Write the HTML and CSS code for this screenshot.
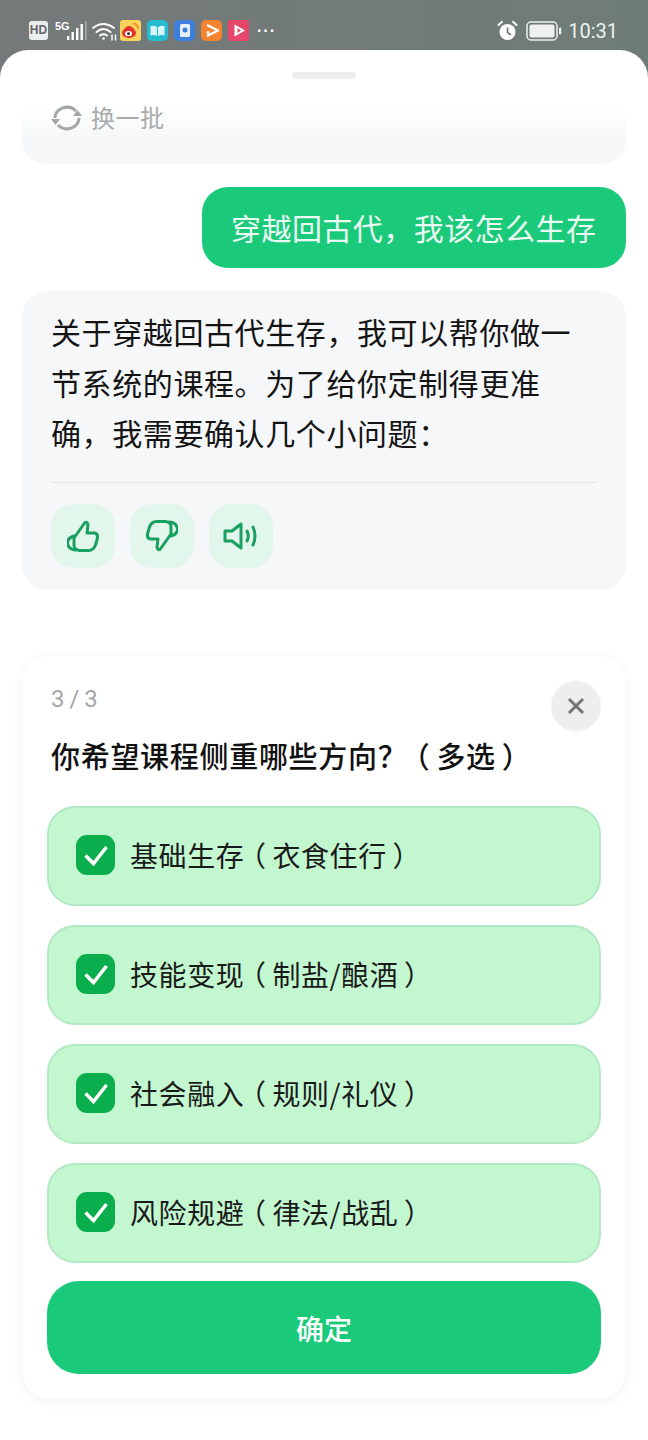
FILE: index.html
```html
<!DOCTYPE html>
<html lang="zh-CN">
<head>
  <meta charset="UTF-8"/>
  <meta name="viewport" content="width=device-width,initial-scale=1.0"/>
  <title>穿越回古代</title>
  <link rel="stylesheet" href="styles.css">
</head>
<body>
  <div class="statusbar">
    <div class="status-left">
      <span class="hd">HD</span>
      <span class="net">
        <span class="net-label">5G</span>
        <svg class="signal" width="20" height="20" viewBox="0 0 20 20">
          <rect x="0" y="15" width="2.400" height="4" fill="#fff"/>
          <rect x="4.500" y="11" width="2.400" height="8" fill="#fff"/>
          <rect x="9" y="7" width="2.400" height="12" fill="#fff"/>
          <rect x="13.500" y="3" width="2.400" height="16" fill="#fff"/>
          <rect x="18" y="0" width="1.600" height="19" fill="#a5abaa"/>
        </svg>
      </span>
      <svg class="wifi" width="25" height="20" viewBox="0 0 25 20" fill="none" stroke="#fff" stroke-width="2" stroke-linecap="round">
        <path d="M1 7Q11 -1 22 7"/>
        <path d="M4.500 11Q11.500 5 18.500 11"/>
        <path d="M8 14.500Q11.500 12 15 14.500"/>
        <circle cx="11.500" cy="17.500" r="1.300" fill="#fff" stroke="none"/>
        <path d="M20 14v5M23.500 14v5" stroke-width="1.500"/>
      </svg>
      <span class="apps">
        <svg class="app" viewBox="0 0 21 21">
          <rect width="21" height="21" rx="3" fill="#fbd35c"/>
          <ellipse cx="9" cy="13" rx="7" ry="5" fill="#e0362c"/>
          <path d="M3 11Q7 4 12 7Q14 8 14 10" fill="#e0362c"/>
          <ellipse cx="8.500" cy="13.500" rx="3.500" ry="2.600" fill="#fff"/>
          <circle cx="8.500" cy="13.700" r="1.400" fill="#222"/>
          <path d="M13 3.500Q18 4 18 9" stroke="#f08a24" stroke-width="1.500" fill="none"/>
        </svg>
        <svg class="app" viewBox="0 0 21 21">
          <rect width="21" height="21" rx="5" fill="#25bcd0"/>
          <path d="M3.500 6Q7 5 10 7V16Q7 14.500 3.500 15.500ZM17.500 6Q14 5 11 7V16Q14 14.500 17.500 15.500Z" fill="#d8f6fa"/>
        </svg>
        <svg class="app" viewBox="0 0 21 21">
          <rect width="21" height="21" rx="5" fill="#3f7fdc"/>
          <rect x="6" y="4" width="10" height="13" rx="1.500" fill="#e4f0fd"/>
          <circle cx="11" cy="10" r="2.500" fill="#3f7fdc"/>
        </svg>
        <svg class="app" viewBox="0 0 21 21">
          <rect width="21" height="21" rx="5" fill="#f5832f"/>
          <path d="M6 5L17 10.500L6 16" fill="none" stroke="#fff" stroke-width="2.400" stroke-linejoin="round"/>
          <circle cx="7" cy="12.500" r="1.500" fill="#fff"/>
        </svg>
        <svg class="app" viewBox="0 0 21 21">
          <rect width="21" height="21" rx="2" fill="#e5476a"/>
          <path d="M6.500 4.500L17 10.500L6.500 16.500Z" fill="#fff"/>
          <path d="M9.500 8L13 10.500L9.500 13Z" fill="#e5476a"/>
        </svg>
      </span>
      <span class="more">···</span>
    </div>
    <div class="status-right">
      <svg class="alarm" width="21" height="21" viewBox="0 0 21 21">
        <circle cx="10.500" cy="12" r="8" fill="#fff"/>
        <path d="M10.500 7.500V12.500L14 15" fill="none" stroke="#6f7a77" stroke-width="1.700"/>
        <path d="M1.500 5L5 1.800M19.500 5L16 1.800" stroke="#fff" stroke-width="2" stroke-linecap="round"/>
      </svg>
      <svg class="battery" width="36" height="20" viewBox="0 0 36 20">
        <rect x="1" y="1" width="30" height="18" rx="4" fill="none" stroke="#eef1f0" stroke-width="1.500"/>
        <rect x="3.500" y="3.500" width="25" height="13" rx="2" fill="#eef1f0"/>
        <rect x="33" y="6.500" width="2.200" height="7" rx="1" fill="#eef1f0"/>
      </svg>
      <span class="time">10:31</span>
    </div>
  </div>

  <div class="sheet">
    <div class="handle"></div>

    <div class="stub">
      <svg class="refresh" width="32" height="28" viewBox="0 0 32 28" fill="none" stroke="#a2a6a6" stroke-width="3">
        <path d="M4 14A12 11 0 0 1 25 7"/>
        <path d="M28 14A12 11 0 0 1 7 21"/>
        <path d="M22 12H31L26.500 6Z" fill="#a2a6a6" stroke="none"/>
        <path d="M0 15H9L4.500 21Z" fill="#a2a6a6" stroke="none"/>
      </svg>
      <span>换一批</span>
    </div>

    <div class="user-row">
      <div class="user-bubble">穿越回古代，我该怎么生存</div>
    </div>

    <div class="bot-card">
      <p class="bot-text">关于穿越回古代生存，我可以帮你做一节系统的课程。为了给你定制得更准确，我需要确认几个小问题：</p>
      <div class="actions">
        <button class="action">
          <svg width="32" height="32" viewBox="0 0 32 32" class="action-icon">
            <path d="M7 18L18 2.500Q20 1.500 21 4.500L20 13H27.500Q31 13.500 30.500 18L28.500 25Q26.500 30.500 21.500 30.500H12.500Q7 30 7 25Z"/>
            <path d="M7 16Q0.500 18 0.500 23Q1 29 8.500 30"/>
          </svg>
        </button>
        <button class="action">
          <svg width="32" height="32" viewBox="0 0 32 32" class="action-icon">
            <g transform="rotate(180 16 16)">
              <path d="M7 18L18 2.500Q20 1.500 21 4.500L20 13H27.500Q31 13.500 30.500 18L28.500 25Q26.500 30.500 21.500 30.500H12.500Q7 30 7 25Z"/>
              <path d="M7 16Q0.500 18 0.500 23Q1 29 8.500 30"/>
            </g>
          </svg>
        </button>
        <button class="action">
          <svg width="36" height="32" viewBox="0 0 36 32" class="action-icon">
            <path d="M2 11V21H9L18 28V4L9 11Z"/>
            <path d="M24 11Q26.500 16 24 21"/>
            <path d="M30 7Q34 16 30 25"/>
          </svg>
        </button>
      </div>
    </div>

    <div class="question-card">
      <div class="question-head">
        <div>
          <div class="step">3 / 3</div>
          <div class="question">你希望课程侧重哪些方向？<span class="paren">（</span>多选<span class="paren">）</span></div>
        </div>
        <button class="close">
          <svg width="18" height="18" viewBox="0 0 18 18" fill="none" stroke="#757575" stroke-width="3">
            <path d="M2 2L16 16M16 2L2 16"/>
          </svg>
        </button>
      </div>

      <div class="options">
        <div class="option">
          <span class="check"><svg width="26" height="26" viewBox="0 0 26 26" fill="none" stroke="#fff" stroke-width="3.500"><path d="M2.500 13.500L10.500 21.500L23.500 5"/></svg></span>
          <span>基础生存<span class="paren">（</span>衣食住行<span class="paren">）</span></span>
        </div>
        <div class="option">
          <span class="check"><svg width="26" height="26" viewBox="0 0 26 26" fill="none" stroke="#fff" stroke-width="3.500"><path d="M2.500 13.500L10.500 21.500L23.500 5"/></svg></span>
          <span>技能变现<span class="paren">（</span>制盐/酿酒<span class="paren">）</span></span>
        </div>
        <div class="option">
          <span class="check"><svg width="26" height="26" viewBox="0 0 26 26" fill="none" stroke="#fff" stroke-width="3.500"><path d="M2.500 13.500L10.500 21.500L23.500 5"/></svg></span>
          <span>社会融入<span class="paren">（</span>规则/礼仪<span class="paren">）</span></span>
        </div>
        <div class="option">
          <span class="check"><svg width="26" height="26" viewBox="0 0 26 26" fill="none" stroke="#fff" stroke-width="3.500"><path d="M2.500 13.500L10.500 21.500L23.500 5"/></svg></span>
          <span>风险规避<span class="paren">（</span>律法/战乱<span class="paren">）</span></span>
        </div>
      </div>

      <button class="confirm">确定</button>
    </div>
  </div>
</body>
</html>
```

FILE: styles.css
```css
* { box-sizing: border-box; }

html, body {
  margin: 0;
  height: 1440px;
  overflow: hidden;
}
body {
  font-family: "Noto Sans CJK SC", "Noto Sans", sans-serif;
  background: linear-gradient(90deg, #75797a, #6e7c77);
  color: #1a1a1a;
}
button {
  border: none;
  padding: 0;
  font-family: inherit;
}
/* brackets sit in the middle of the em box in the reference */
.paren {
  display: inline-block;
  width: 1em;
  text-align: center;
  font-feature-settings: "palt";
}

/* status bar */
.statusbar {
  height: 50px;
  padding: 20px 30px 0 29px;
  display: flex;
  justify-content: space-between;
  align-items: flex-start;
}
.status-left, .status-right {
  display: flex;
  align-items: center;
}
.hd {
  width: 19px;
  height: 19px;
  border-radius: 3px;
  background: #eceeee;
  color: #62676a;
  font: bold 12px/19px "Liberation Sans", sans-serif;
  text-align: center;
}
.net {
  width: 33px;
  height: 20px;
  margin-left: 7px;
  display: flex;
  align-items: flex-end;
  position: relative;
}
.net-label {
  position: absolute;
  left: 0;
  top: -1px;
  color: #fff;
  font: bold 11px/12px "Liberation Sans Narrow", "Liberation Sans", sans-serif;
}
.signal { margin-left: 12px; }
.wifi { margin-left: 4px; }
.apps {
  display: flex;
  gap: 6px;
  margin-left: 3px;
}
.app {
  width: 21px;
  height: 21px;
  display: block;
}
.more {
  margin-left: 8px;
  color: #fff;
  font: bold 16px/20px "Liberation Sans", sans-serif;
  letter-spacing: 1px;
}
.status-right { gap: 8px; }
.battery { margin-right: -2px; }
.time {
  color: #eef1f0;
  font: 20px/20px Roboto, sans-serif;
}

/* sheet */
.sheet {
  height: 1390px;
  padding: 22px 22px 0;
  background: #fff;
  border-radius: 28px 28px 0 0;
}
.handle {
  width: 64px;
  height: 7px;
  margin: 0 auto;
  border-radius: 4px;
  background: #eeeeee;
}

.stub {
  height: 64px;
  margin-top: 21px;
  padding: 0 0 0 29px;
  display: flex;
  align-items: flex-start;
  gap: 8px;
  border-radius: 0 0 24px 24px;
  background: linear-gradient(180deg, #fff 10%, #f5f7f8 60%);
  color: #a8acac;
  font-size: 24px;
  line-height: 34px;
  letter-spacing: 0.500px;
}
.refresh { margin-top: 4px; }

.user-row {
  display: flex;
  justify-content: flex-end;
  margin-top: 23px;
}
.user-bubble {
  width: 424px;
  height: 81px;
  padding: 0 0 2px 29px;
  display: flex;
  align-items: center;
  border-radius: 26px;
  background: #1bc97a;
  color: #e9fbf2;
  font-size: 30px;
  letter-spacing: 0.450px;
}

.bot-card {
  height: 299px;
  margin-top: 23px;
  padding: 15px 29px 0;
  border-radius: 26px;
  background: #f6f7f9;
}
.bot-text {
  margin: 0;
  height: 177px;
  border-bottom: 1px solid #e4e6e8;
  color: #141414;
  font-size: 30px;
  line-height: 50.500px;
  letter-spacing: 0.600px;
}
.actions {
  display: flex;
  gap: 15px;
  margin-top: 21px;
}
.action {
  width: 64px;
  height: 64px;
  display: flex;
  align-items: center;
  justify-content: center;
  border-radius: 22px;
  background: #e3f6ec;
}
.action-icon {
  fill: none;
  stroke: #17a060;
  stroke-width: 3;
  stroke-linejoin: round;
  stroke-linecap: round;
}

/* question card */
.question-card {
  height: 743px;
  margin-top: 66px;
  padding: 25px 25px 0;
  border-radius: 28px;
  background: #fff;
  box-shadow: 0 2px 14px rgba(0,0,0,0.05);
}
.question-head {
  display: flex;
  justify-content: space-between;
  align-items: flex-start;
}
.question-head > div { padding-left: 4px; }
.step {
  color: #a6a6a6;
  font: 24px/36px Roboto, sans-serif;
  letter-spacing: -0.500px;
}
.question {
  margin-top: 16px;
  font-size: 29px;
  line-height: 44px;
  font-weight: 500;
  letter-spacing: 0.700px;
  color: #111;
  white-space: nowrap;
}
.close {
  width: 50px;
  height: 50px;
  display: flex;
  align-items: center;
  justify-content: center;
  border-radius: 50%;
  background: #eeeeee;
}

.options {
  display: flex;
  flex-direction: column;
  gap: 19px;
  margin-top: 29px;
}
.option {
  height: 100px;
  padding: 0 0 2px 27px;
  display: flex;
  align-items: center;
  gap: 15px;
  border: 2px solid #b2e9c4;
  border-radius: 28px;
  background: #c3f7d0;
  font-size: 28px;
  letter-spacing: 0.600px;
}
.check {
  width: 39px;
  height: 40px;
  display: flex;
  align-items: center;
  justify-content: center;
  border-radius: 11px;
  background: #0aae4c;
}

.confirm {
  display: block;
  width: 100%;
  height: 93px;
  margin-top: 18px;
  border-radius: 32px;
  background: #1bc97a;
  color: #fff;
  font-size: 28px;
  font-weight: 500;
}
```
